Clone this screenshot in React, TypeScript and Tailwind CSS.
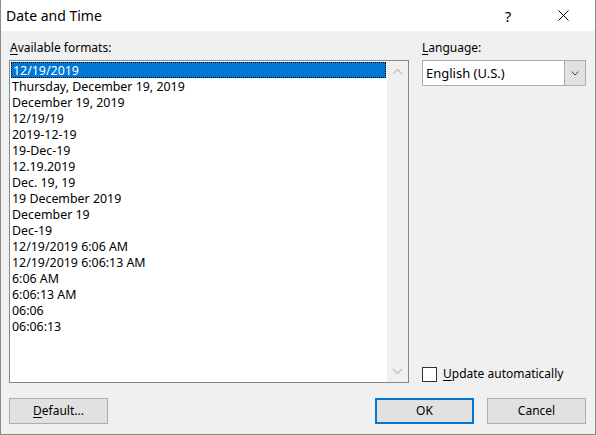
import React from "react";

const formats = [
  "12/19/2019",
  "Thursday, December 19, 2019",
  "December 19, 2019",
  "12/19/19",
  "2019-12-19",
  "19-Dec-19",
  "12.19.2019",
  "Dec. 19, 19",
  "19 December 2019",
  "December 19",
  "Dec-19",
  "12/19/2019 6:06 AM",
  "12/19/2019 6:06:13 AM",
  "6:06 AM",
  "6:06:13 AM",
  "06:06",
  "06:06:13",
];

function Chevron({ up }: { up?: boolean }) {
  return (
    <svg width="11" height="7" viewBox="0 0 11 7">
      <path
        d={up ? "M1 6 L5.5 1.5 L10 6" : "M1 1 L5.5 5.5 L10 1"}
        fill="none"
        stroke="currentColor"
        strokeWidth="1.4"
      />
    </svg>
  );
}

function AccessLabel({ k, rest }: { k: string; rest: string }) {
  return (
    <span>
      <span className="underline underline-offset-2">{k}</span>
      {rest}
    </span>
  );
}

export default function App() {
  return (
    <div className="w-[596px] h-[435px] flex flex-col bg-[#f0f0f0] border-x border-b border-[#8a8a8a] font-['Segoe_UI','Noto_Sans',sans-serif] text-[12px] text-black leading-[16px] select-none">
      {/* title bar */}
      <div className="h-[31px] bg-white flex items-center shrink-0">
        <div className="pl-[5px] text-[14px] flex-1">Date and Time</div>
        <div className="w-[12px] text-[15px] text-center mr-[44px]">?</div>
        <div className="w-[11px] flex justify-center mr-[26px]">
          <svg width="11" height="11" viewBox="0 0 11 11">
            <path d="M0.5 0.5 L10.5 10.5 M10.5 0.5 L0.5 10.5" stroke="#000" strokeWidth="1" />
          </svg>
        </div>
      </div>

      {/* body */}
      <div className="flex-1 flex flex-col pl-[8px] pr-[9px] pt-[9px] pb-[10px]">
        <div className="flex gap-[13px]">
          <div className="w-[400px] flex flex-col">
            <div className="pl-[1px]">
              <AccessLabel k="A" rest="vailable formats:" />
            </div>
            <div className="mt-[4px] h-[323px] flex border border-[#828790] bg-white">
              <div className="flex-1 px-[1px] pt-[1px] text-[12.4px]">
                {formats.map((f, i) => (
                  <div
                    key={f}
                    className={`h-[16px] pl-[1px] whitespace-nowrap ${
                      i === 0
                        ? "bg-[#0078d7] text-white border border-dotted border-black leading-[15px]"
                        : "leading-[17px]"
                    }`}
                  >
                    {f}
                  </div>
                ))}
              </div>
              <div className="w-[21px] bg-[#f0f0f0] flex flex-col items-center justify-between py-[7px] text-[#c2c2c2]">
                <Chevron up />
                <Chevron />
              </div>
            </div>
          </div>

          <div className="w-[164px] flex flex-col">
            <div>
              <AccessLabel k="L" rest="anguage:" />
            </div>
            <div className="mt-[4px] h-[26px] flex border border-[#adadad] bg-white">
              <div className="flex-1 flex items-center pl-[3px] text-[13px]">English (U.S.)</div>
              <div className="w-[21px] bg-[#e1e1e1] border-l border-[#adadad] flex items-center justify-center text-[#404040]">
                <svg width="8" height="5" viewBox="0 0 8 5">
                  <path d="M0.5 0.5 L4 4 L7.5 0.5" fill="none" stroke="currentColor" strokeWidth="1" />
                </svg>
              </div>
            </div>
            <div className="flex-1" />
            <div className="flex items-center gap-[6px] mb-[1px]">
              <div className="w-[15px] h-[15px] border border-[#333] bg-white" />
              <span className="text-[12px]">
                <AccessLabel k="U" rest="pdate automatically" />
              </span>
            </div>
          </div>
        </div>

        <div className="mt-[15px] flex items-center">
          <button className="w-[99px] h-[26px] bg-[#e1e1e1] border border-[#adadad] text-[12px]">
            <AccessLabel k="D" rest="efault..." />
          </button>
          <div className="flex-1" />
          <button className="w-[99px] h-[26px] bg-[#e1e1e1] border-2 border-[#0078d7] text-[12px]">
            OK
          </button>
          <button className="w-[99px] h-[26px] ml-[13px] bg-[#e1e1e1] border border-[#adadad] text-[12px]">
            Cancel
          </button>
        </div>
      </div>
    </div>
  );
}
